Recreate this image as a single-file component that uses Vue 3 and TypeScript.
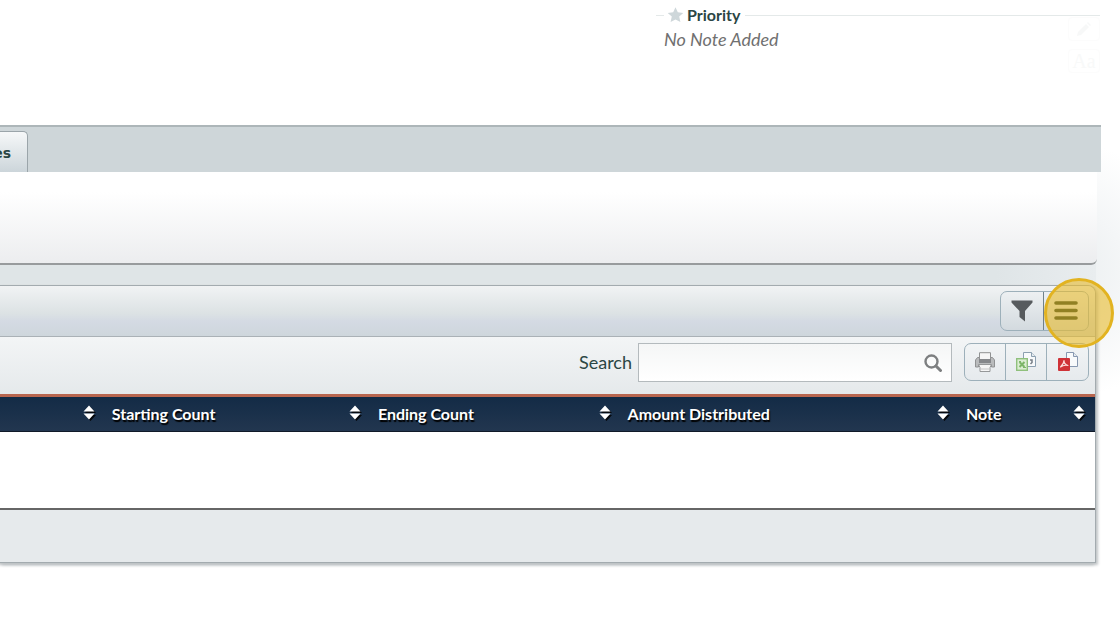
<script setup lang="ts">
import { ref } from 'vue'

interface Column {
  key: string
  label: string
}

const columns: Column[] = [
  { key: 'first', label: '' },
  { key: 'starting', label: 'Starting Count' },
  { key: 'ending', label: 'Ending Count' },
  { key: 'amount', label: 'Amount Distributed' },
  { key: 'note', label: 'Note' },
]

const search = ref('')
</script>

<template>
  <main class="page">
    <section class="top">
      <fieldset class="priority">
        <legend>
          <svg width="17" height="16" viewBox="0 0 16 16" aria-hidden="true">
            <path d="M8 .3l2.300 5 5.500.6-4.100 3.700 1.200 5.500L8 12.400l-4.900 2.700 1.200-5.500L.2 5.900l5.500-.6z" fill="#ced7da" />
          </svg>
          Priority
        </legend>
        <p class="empty-note">No Note Added</p>
        <div class="note-tools">
          <button type="button" aria-label="Edit note">
            <svg width="16" height="16" viewBox="0 0 16 16"><path d="M1 15l1-4 8-8 3 3-8 8zM11 2l1-1 3 3-1 1z" fill="#f7f8f8" /></svg>
          </button>
          <button type="button" class="font-tool">Aa</button>
        </div>
      </fieldset>
    </section>

    <nav class="tabs">
      <a class="tab" href="#">es</a>
    </nav>

    <div class="content">
      <section class="panel"></section>

      <section class="grid">
        <header class="grid-head">
          <div class="group tall">
            <button type="button" aria-label="Filter">
              <svg width="22" height="22" viewBox="0 0 22 22">
                <path d="M.5.500h21v2L14 11v10.500L8.500 17v-6L.5 2.500z" fill="#575b5e" />
              </svg>
            </button>
            <button type="button" aria-label="Menu" class="menu">
              <svg width="24" height="20" viewBox="0 0 24 20">
                <path d="M2 2h20M2 9.500h20M2 17h20" stroke="#102a18" stroke-width="3.600" stroke-linecap="round" />
              </svg>
              <span class="highlight"></span>
            </button>
          </div>
        </header>

        <div class="toolbar">
          <label for="grid-search">Search</label>
          <div class="search">
            <input id="grid-search" v-model="search" type="text" />
            <svg width="18" height="18" viewBox="0 0 18 18" aria-hidden="true">
              <circle cx="7.500" cy="7.500" r="6" fill="none" stroke="#7d7f80" stroke-width="2.400" />
              <path d="M12 12l4.500 4.500" stroke="#7d7f80" stroke-width="3" stroke-linecap="round" />
            </svg>
          </div>
          <div class="group export">
            <button type="button" aria-label="Print">
              <svg width="20" height="20" viewBox="0 0 20 20">
                <path d="M4.500 7V.7h11V7" fill="#f6f6f6" stroke="#909292" />
                <path d="M2.500 5.500h2v2h11v-2h2l2 2.500v7h-3v-2h-13v2h-3V8z" fill="#b9bbbc" stroke="#909293" />
                <path d="M4 7h12v4H4z" fill="#85878a" />
                <path d="M3.500 12.500h13l-1.500 3v4H5v-4z" fill="#f5f5f5" stroke="#969899" />
                <path d="M6 17h8" stroke="#c4c4c4" />
              </svg>
            </button>
            <button type="button" aria-label="Export to spreadsheet">
              <svg width="20" height="20" viewBox="0 0 20 20">
                <path d="M7.500.5h8l4 4v10h-12z" fill="#f8fafb" stroke="#8da0b0" />
                <path d="M15.500.5v4h4" fill="#e6ebef" stroke="#8da0b0" />
                <path d="M14 8h2v2.500L14.500 12" fill="none" stroke="#777f87" stroke-width="1.500" />
                <rect x=".7" y="6.700" width="10.600" height="11.600" fill="#dcedd3" stroke="#8fc07c" stroke-width="1.400" />
                <path d="M3.500 10l5 5M8.500 10l-5 5" stroke="#7cb568" stroke-width="2" />
                <path d="M3 9.500h2M7 15.500h3" stroke="#7cb568" />
              </svg>
            </button>
            <button type="button" aria-label="Export to PDF">
              <svg width="20" height="20" viewBox="0 0 20 20">
                <path d="M8.500.5h7l4 4v10h-11z" fill="#f8fafb" stroke="#8798b0" />
                <path d="M15.500.5v4h4" fill="#e6ebef" stroke="#8798b0" />
                <rect y="6" width="12" height="13" rx="1" fill="#cf3237" />
                <path d="M6 8.500c0 3-2 5-3.500 6.500 2-1.500 5-2 7.500-1.500-2-.5-4-2.500-4-5z" fill="none" stroke="#fbdcda" stroke-width="1.200" stroke-linejoin="round" />
              </svg>
            </button>
          </div>
        </div>

        <table>
          <colgroup>
            <col v-for="c in columns" :key="c.key" :class="c.key" />
          </colgroup>
          <thead>
            <tr>
              <th v-for="c in columns" :key="c.key" scope="col">
                <div class="th">
                  <span>{{ c.label }}</span>
                  <button type="button" aria-label="Sort">
                    <svg width="13" height="16" viewBox="0 0 13 16">
                      <path d="M2 8l5.500-6L13 8zM2 10h11l-5.500 6z" fill="#05080c" />
                      <path d="M.5 6.500L6 .5l5.500 6zM.5 8.500h11L6 14.500z" fill="#fff" />
                    </svg>
                  </button>
                </div>
              </th>
            </tr>
          </thead>
          <tbody>
            <tr><td :colspan="columns.length"></td></tr>
          </tbody>
          <tfoot>
            <tr><td :colspan="columns.length"></td></tr>
          </tfoot>
        </table>
      </section>
    </div>
  </main>
</template>

<style>
body {
  margin: 0;
  background: #fff;
}
</style>

<style scoped>
* {
  box-sizing: border-box;
}
.page {
  font-family: Lato, "Liberation Sans", sans-serif;
  font-size: 16px;
  color: #2b4644;
  overflow: hidden;
  padding-bottom: 48px;
  background: radial-gradient(circle 130px at calc(100% - 60px) 270px, #e9edef, #fff);
}
button {
  font: inherit;
  padding: 0;
  border: 0;
  background: none;
  display: flex;
  align-items: center;
  justify-content: center;
}
svg {
  display: block;
  flex: none;
}
.top {
  display: flex;
  justify-content: flex-end;
  height: 125px;
  padding: 5px 20px 0 0;
}
.priority {
  flex: 0 0 444px;
  display: flex;
  align-items: flex-start;
  justify-content: space-between;
  border: 0;
  border-top: 1px solid #e4e9e9;
  margin: 0;
  padding: 0 0 0 8px;
}
.priority legend {
  display: flex;
  align-items: center;
  gap: 3px;
  font-weight: 700;
  line-height: 20px;
  padding: 0 5px 0 3px;
}
.empty-note {
  margin: 4px 0 0;
  font-size: 18px;
  line-height: 20px;
  font-style: italic;
  color: #707070;
}
.note-tools {
  display: grid;
  gap: 8px;
  margin-top: -8px;
}
.note-tools button {
  width: 32px;
  height: 24px;
  border: 1px solid #fcfcfc;
  border-radius: 4px;
}
.note-tools .font-tool {
  font-family: "Liberation Serif", serif;
  font-size: 20px;
  color: #f8f9f9;
}
.tabs {
  display: flex;
  align-items: flex-end;
  height: 47px;
  margin-right: 19px;
  background: #ced6d9;
  border-top: 2px solid #adb6b9;
}
.tab {
  display: flex;
  align-items: center;
  justify-content: flex-end;
  width: 28px;
  height: 41px;
  padding: 2px 16px 0 0;
  border: 1px solid #9ba5aa;
  border-width: 1px 1px 0 0;
  border-radius: 0 5px 0 0;
  background: linear-gradient(#f6f8f9, #ccd5da);
  font: 700 14px/20px "DejaVu Sans", sans-serif;
  color: #2b4644;
  text-decoration: none;
}
.content {
  margin-right: 24px;
  background:
    linear-gradient(#fff 0, #fff 80px, transparent 80px),
    linear-gradient(to right, #dfe5e7 calc(100% - 100px), #e9edef) 0 80px / 100% 40px no-repeat;
}
.panel {
  height: 93px;
  margin-right: -1px;
  border-bottom: 2px solid #989b9d;
  border-radius: 0 0 6px 0;
  background: linear-gradient(#fff 0, #fff 20px, #ecedef);
}
.grid {
  margin-top: 20px;
  border: 1px solid #a3abaf;
  border-left: 0;
  border-radius: 0 8px 0 0;
  box-shadow: 2px 2px 3px #bfc3c5, -2px 2px 3px #bfc3c5;
}
.grid-head {
  display: flex;
  justify-content: flex-end;
  height: 51px;
  padding: 5px 6px 0 0;
  border-bottom: 1px solid #aab1b6;
  border-radius: 0 8px 0 0;
  background: linear-gradient(#f1f3f4, #dce2e4 55%, #d4dae3 70%, #ced6dc);
}
.group {
  display: flex;
  border: 1px solid #9db0ba;
  border-radius: 7px;
  background: linear-gradient(#f1f4f5, #e6eaed);
}
.group button {
  width: 41px;
  position: relative;
}
.export button:first-child {
  width: 40px;
}
.export button:last-child {
  width: 42px;
}
.group button + button {
  border-left: 1px solid #9db0ba;
}
.tall {
  height: 40px;
  background: linear-gradient(#edf0f2, #d3dadf);
}
.group.tall button {
  width: 42px;
}
.group.tall .menu {
  width: 45px;
  border-left-color: #718189;
}
.highlight {
  position: absolute;
  left: 0;
  top: -14px;
  width: 70px;
  height: 70px;
  border: 3px solid #e2b321;
  border-radius: 50%;
  background: rgba(231, 187, 43, 0.6);
  z-index: 2;
  pointer-events: none;
}
.toolbar {
  display: flex;
  align-items: flex-start;
  justify-content: flex-end;
  height: 57px;
  padding: 6px 6px 0 0;
  background: linear-gradient(#f3f5f6, #e5e9eb);
}
.toolbar label {
  font-size: 18px;
  line-height: 38px;
  margin-right: 6px;
}
.search {
  display: flex;
  align-items: center;
  width: 314px;
  height: 39px;
  padding-right: 9px;
  margin-right: 12px;
  border: 1px solid #b4babd;
  background: linear-gradient(#f5f6f6, #fff);
}
.search input {
  flex: 1;
  min-width: 0;
  height: 100%;
  border: 0;
  padding: 0 8px;
  background: none;
  font: inherit;
  outline: 0;
}
.export {
  height: 38px;
}
table {
  width: 100%;
  table-layout: fixed;
  border-collapse: separate;
  border-spacing: 0;
  background: #fff;
}
col.first {
  width: 9.3%;
}
col.starting {
  width: 24.3%;
}
col.ending {
  width: 22.8%;
}
col.amount {
  width: 30.9%;
}
th {
  height: 38px;
  padding: 0 0 2px;
  border-top: 3px solid #b8664f;
  border-bottom: 1px solid #101a28;
  background: linear-gradient(#132b46, #22364f);
  color: #fff;
  font-weight: 700;
  text-shadow: 1px 2px 1px #000;
}
.th {
  display: flex;
  align-items: center;
  justify-content: space-between;
  padding: 0 6px 0 10px;
}
th:last-child .th {
  padding-right: 9px;
}
td {
  padding: 0;
}
tbody td {
  height: 76px;
}
tfoot td {
  height: 54px;
  border-top: 2px solid #666;
  background: #e6eaec;
}
</style>
